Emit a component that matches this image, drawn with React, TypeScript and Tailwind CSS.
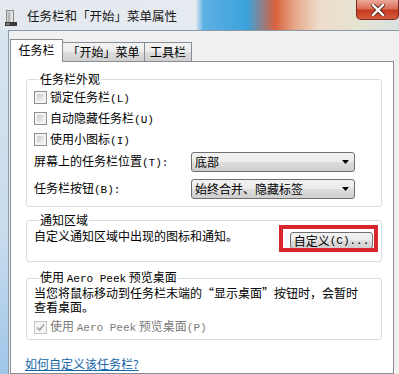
import React from 'react';

const Mono: React.FC<{ children: React.ReactNode }> = ({ children }) => (
  <span className="font-['Liberation_Mono',monospace] text-[11px]">{children}</span>
);

const CheckBox: React.FC<{ checked?: boolean; disabled?: boolean }> = ({ checked, disabled }) => (
  <span
    className={
      disabled
        ? 'flex h-[13px] w-[13px] shrink-0 items-center justify-center border border-[#c4c4c4] bg-[#f4f4f4]'
        : 'flex h-[13px] w-[13px] shrink-0 items-center justify-center border border-[#8e8f8f] bg-[#f4f4f4] p-[2px]'
    }
  >
    {checked ? (
      <svg width="9" height="9" viewBox="0 0 9 9">
        <path d="M1 4.5 L3.5 7 L8 1.5" fill="none" stroke="#a3a3a3" strokeWidth="1.6" />
      </svg>
    ) : (
      <span className="block h-full w-full bg-[linear-gradient(135deg,#cbcbcb,#f2f2f2)]" />
    )}
  </span>
);

const Combo: React.FC<{ value: string }> = ({ value }) => (
  <div className="flex h-[20px] w-[164px] items-center justify-between rounded-[3px] border border-[#707070] bg-[linear-gradient(180deg,#f2f2f2_0%,#ebebeb_48%,#dddddd_52%,#cfcfcf_100%)] pl-[3px] pr-[5px] leading-[16px]">
    <span>{value}</span>
    <svg width="7" height="4" viewBox="0 0 7 4">
      <path d="M0 0 H7 L3.5 4 Z" fill="#000" />
    </svg>
  </div>
);

const Group: React.FC<{ title: React.ReactNode; className?: string; legendClass?: string; children: React.ReactNode }> = ({
  title,
  className,
  legendClass,
  children,
}) => (
  <fieldset className={'rounded-[3px] border border-[#d5dfe5] ' + (className || '')}>
    <legend className={'ml-[5px] px-[1px] ' + (legendClass || 'leading-[16px]')}>{title}</legend>
    {children}
  </fieldset>
);

export default function App() {
  return (
    <div className="flex h-[374px] w-[399px] flex-col overflow-hidden bg-[#dfe7ef] font-['Noto_Sans_CJK_SC',sans-serif] text-[12px] text-black">
      {/* title bar */}
      <div className="flex h-[30px] shrink-0 bg-[linear-gradient(90deg,#e2e8ee_0%,#e6ebf1_49%,#5db0e4_51%,#3ba2dc_62%,#d9613e_69%,#e7a98a_74%,#eedccb_80%,#e6e4d2_90%,#d8e2e2_100%)]">
        <svg className="ml-[5px] mt-[10px]" width="12" height="16" viewBox="0 0 12 16">
          <rect x="1.5" y="0.5" width="7" height="13" fill="#e4e4e4" stroke="#8a8a8a" />
          <rect x="2.5" y="1.5" width="3" height="11" fill="#b8b8b8" />
          <rect x="0" y="12" width="12" height="4" fill="#3a3a3a" />
          <rect x="1" y="13" width="4" height="2" fill="#7a7a7a" />
        </svg>
        <span className="ml-[10px] mt-[7px] text-[12.5px] leading-[18px] text-[#1a1a1a]">任务栏和「开始」菜单属性</span>
        <div className="ml-auto flex h-[20px] w-[43px] items-center justify-center rounded-b-[5px] border border-t-0 border-[#7a2a1e] bg-[linear-gradient(180deg,#eba99a_0%,#dc6f58_45%,#c6391f_55%,#d65c3e_100%)]">
          <svg width="14" height="12" viewBox="0 0 14 12">
            <path d="M2 1 L12 11 M12 1 L2 11" stroke="#5a2418" strokeWidth="4.2" strokeLinecap="square" />
            <path d="M2 1 L12 11 M12 1 L2 11" stroke="#ffffff" strokeWidth="2.4" strokeLinecap="square" />
          </svg>
        </div>
      </div>

      <div className="flex flex-1">
        {/* left frame */}
        <div className="w-[8px] bg-[linear-gradient(180deg,#d8e3ee_0%,#c8dcee_60%,#9fc6e8_100%)]" />
        {/* client */}
        <div className="flex flex-1 flex-col border-l border-t border-[#8b9aa8] bg-[#f0f0f0] pl-[1px] pt-[7px]">
          <div className="flex h-[23px] items-end">
            <div className="relative z-10 -mb-px flex h-[23px] w-[53px] items-center justify-center border border-b-0 border-[#898c95] bg-white pb-[2px] leading-[16px]">
              任务栏
            </div>
            <div className="flex h-[19px] w-[82px] items-center justify-center border border-b-0 border-l-0 border-[#898c95] bg-[linear-gradient(180deg,#f3f3f3_0%,#ebebeb_50%,#dddddd_51%,#cfcfcf_100%)] leading-[16px]">
              「开始」菜单
            </div>
            <div className="flex h-[19px] w-[47px] items-center justify-center border border-b-0 border-l-0 border-[#898c95] bg-[linear-gradient(180deg,#f3f3f3_0%,#ebebeb_50%,#dddddd_51%,#cfcfcf_100%)] leading-[16px]">
              工具栏
            </div>
          </div>

          {/* tab page */}
          <div className="flex w-[384px] flex-1 flex-col border border-[#898c95] bg-white pl-[15px] pr-[11px]">
            <Group title="任务栏外观" className="mt-[9px] pb-[7px] pl-[7px]">
              {['锁定任务栏', '自动隐藏任务栏', '使用小图标'].map((t, i) => (
                <div key={t} className="flex h-[21px] items-center gap-[3px] leading-[16px]">
                  <CheckBox />
                  <span>
                    {t}
                    <Mono>({['L', 'U', 'I'][i]})</Mono>
                  </span>
                </div>
              ))}
              <div className="mt-[2px] flex h-[20px] items-center leading-[16px]">
                <span className="w-[157px]">
                  屏幕上的任务栏位置<Mono>(T):</Mono>
                </span>
                <Combo value="底部" />
              </div>
              <div className="mt-[7px] flex h-[20px] items-center leading-[16px]">
                <span className="w-[157px]">
                  任务栏按钮<Mono>(B):</Mono>
                </span>
                <Combo value="始终合并、隐藏标签" />
              </div>
            </Group>

            <Group title="通知区域" className="mt-[5px] pb-[12px] pl-[7px] pr-[8px]">
              <div className="flex items-start justify-between">
                <span className="leading-[16px]">自定义通知区域中出现的图标和通知。</span>
                <div className="relative mt-[4px]">
                  <button
                    type="button"
                    className="flex h-[17px] w-[83px] items-center justify-center rounded-[3px] border border-[#707070] bg-[linear-gradient(180deg,#f2f2f2_0%,#ebebeb_48%,#dddddd_52%,#cfcfcf_100%)] leading-[14px]"
                  >
                    自定义<Mono>(C)...</Mono>
                  </button>
                  <span className="pointer-events-none absolute -bottom-[3px] -left-[11px] -right-[5px] -top-[7px] border-[4px] border-[#d7262d]" />
                </div>
              </div>
            </Group>

            <Group
              title={
                <>
                  使用 <Mono>Aero Peek</Mono> 预览桌面
                </>
              }
              legendClass="leading-[14px]"
              className="mt-[8px] pb-[3px] pl-[7px]"
            >
              <p className="w-[330px] leading-[14px]">当您将鼠标移动到任务栏末端的“显示桌面”按钮时，会暂时查看桌面。</p>
              <div className="mt-[4px] flex h-[18px] items-center gap-[3px] leading-[16px] text-[#7a7a7a]">
                <CheckBox checked disabled />
                <span>
                  使用 <Mono>Aero Peek</Mono> 预览桌面<Mono>(P)</Mono>
                </span>
              </div>
            </Group>

            <a href="#" className="-ml-px mt-[16px] self-start leading-[16px] text-[#1566a8] underline">
              如何自定义该任务栏?
            </a>
          </div>
        </div>
      </div>
    </div>
  );
}
